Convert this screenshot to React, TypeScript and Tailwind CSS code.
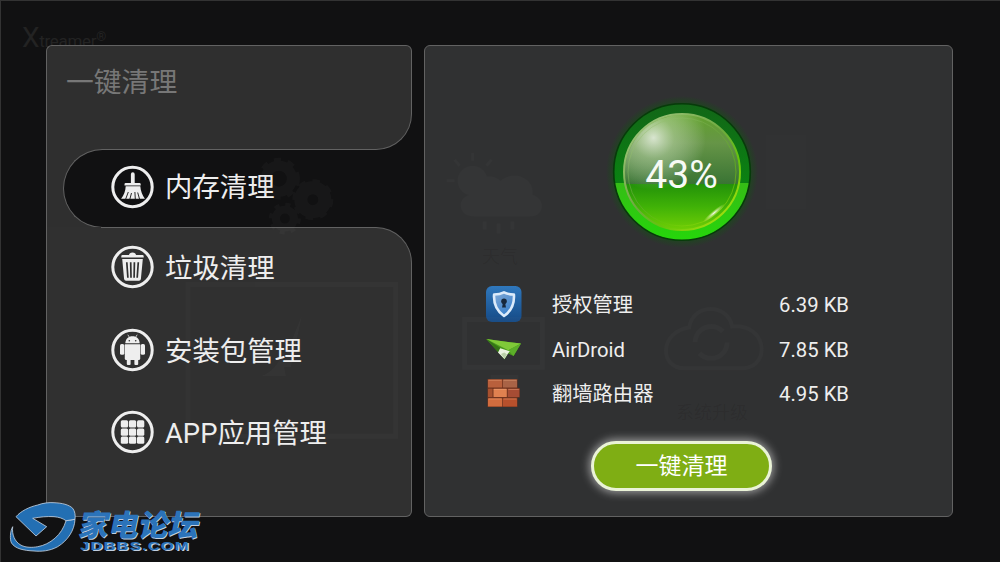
import type { ReactNode } from "react";

const menuItems = [
  { label: "垃圾清理", icon: <TrashIcon /> },
  { label: "安装包管理", icon: <AndroidIcon /> },
  { label: "APP应用管理", icon: <GridIcon /> },
];

const processes = [
  { name: "授权管理", size: "6.39 KB", icon: <ShieldIcon /> },
  { name: "AirDroid", size: "7.85 KB", icon: <PlaneIcon /> },
  { name: "翻墙路由器", size: "4.95 KB", icon: <BricksIcon /> },
];

function Ring({ children }: { children: ReactNode }) {
  return (
    <svg viewBox="0 0 44 44" className="h-11 w-11 shrink-0" fill="#eeeeee">
      <circle cx="21.5" cy="22" r="19.7" fill="none" stroke="#eeeeee" strokeWidth="3" />
      <g transform="translate(-0.5 0)">{children}</g>
    </svg>
  );
}

function BroomIcon() {
  return (
    <Ring>
      <path d="M20.4 18V9.200q0-1.900 1.900-1.900t1.900 1.900V18h4.800q1.200 0 1.200 1.200v1.200H14v-1.200q0-1.200 1.200-1.200z" />
      <path d="M15.2 21.2h14.6c.4 4.800 2 9 4.600 12.600H10.600c2.800-3.600 4.400-7.800 4.600-12.600z" />
      <path
        d="M17.8 27l-2.6 7M21 28l-1.6 6M24.4 27l.4 7M27.2 27.5l1.8 6.5"
        stroke="#111111"
        strokeWidth="0.9"
      />
    </Ring>
  );
}

function TrashIcon() {
  return (
    <Ring>
      <path d="M18.5 10q.3-2.500 3.500-2.500t3.500 2.500H32q1.200 0 1.200 1.300v1.200H10.800v-1.200Q10.800 10 12 10z" />
      <path d="M11.7 14h20.6l-1.9 20q-.2 1.7-1.9 1.7h-13q-1.7 0-1.9-1.7z" />
      <path
        d="M16.3 17.2l1.1 15.6M20.2 17.2l.3 15.6M23.9 17.2l-.3 15.6M27.8 17.2l-1.1 15.6"
        stroke="#303030"
        strokeWidth="1.7"
      />
    </Ring>
  );
}

function AndroidIcon() {
  return (
    <Ring>
      <path d="M14.8 15.3c.2-4.5 3.2-7 7.2-7s7 2.5 7.2 7z" />
      <path d="M17.3 6.7l1.6 2.6M26.7 6.7l-1.6 2.6" stroke="#eeeeee" strokeWidth="0.8" />
      <circle cx="18.8" cy="12.7" r="0.8" fill="#303030" />
      <circle cx="25.2" cy="12.7" r="0.8" fill="#303030" />
      <path d="M14.3 16.2h15.4v14.2q0 1.6-1.6 1.6H15.9q-1.6 0-1.6-1.6z" />
      <rect x="9.5" y="16" width="4.3" height="10.8" rx="1.6" />
      <rect x="30.2" y="16" width="4.3" height="10.8" rx="1.6" />
      <rect x="16.3" y="30" width="3.8" height="7" rx="1" />
      <rect x="23.9" y="30" width="3.8" height="7" rx="1" />
    </Ring>
  );
}

function GridIcon() {
  const cells = [10.3, 18.4, 26.5];
  return (
    <Ring>
      {cells.map((y) =>
        cells.map((x) => <rect key={`${x}-${y}`} x={x} y={y} width="7.3" height="7.3" rx="1.5" />)
      )}
    </Ring>
  );
}

function ShieldIcon() {
  return (
    <svg viewBox="0 0 36 36" className="h-9 w-9">
      <defs>
        <linearGradient id="shieldTile" x1="0" y1="0" x2="0" y2="1">
          <stop offset="0" stopColor="#2f78bd" />
          <stop offset="1" stopColor="#154a86" />
        </linearGradient>
        <linearGradient id="shieldFace" x1="0" y1="0" x2="0.6" y2="1">
          <stop offset="0" stopColor="#82aad6" />
          <stop offset="1" stopColor="#3980cb" />
        </linearGradient>
      </defs>
      <rect width="35.5" height="36" rx="6" fill="url(#shieldTile)" />
      <path
        d="M18 6.3c3 1.6 6 2.2 9.9 2.2.7 10-2.7 16.7-9.9 21.5C10.8 25.2 7.4 18.5 8.1 8.5c3.9 0 6.9-.6 9.9-2.2z"
        fill="url(#shieldFace)"
        stroke="#dcebfa"
        strokeWidth="2.6"
        strokeLinejoin="round"
      />
      <circle cx="18" cy="15.2" r="2.8" fill="#17283c" />
      <path d="M17 16.5h2l1 5h-4z" fill="#17283c" />
    </svg>
  );
}

function PlaneIcon() {
  return (
    <svg viewBox="0 0 36 24" className="h-6 w-9">
      <path d="M.3 2L35 6.6 27.5 19 22 16.6 18.5 22.6 12.5 15.5z" fill="#49971d" />
      <path d="M.3 2L35 6.6 22.3 13.2z" fill="#7fc938" />
      <path d="M.3 2l22 11.2 5.2 5.8L35 6.6 22.3 13.2z" fill="#5cae29" />
      <path d="M.3 2l12.2 13.5 1.7-4.8z" fill="#347416" />
      <path d="M14.2 11.2l9.6 3-1.8 2.4-3.5 5.4-6.5-6.5z" fill="#eaf2df" />
      <path d="M15 17l3.3-1.4 2.6 1.6-2.4 4.2z" fill="#b9cfa7" />
    </svg>
  );
}

function BricksIcon() {
  const bricks = [
    [1, 0.5, 14.2, 8, "#b9603c"],
    [16, 0.5, 14, 8, "#a96346"],
    [1, 9.7, 4.5, 8.4, "#a7512f"],
    [6.5, 9.7, 13.3, 8.4, "#e08150"],
    [20.8, 9.7, 11.5, 8.4, "#a64c34"],
    [1, 19.3, 14.2, 8.2, "#d16c3e"],
    [16, 19.3, 14, 8.2, "#b6502c"],
  ] as const;
  return (
    <svg viewBox="-0.5 0 35 28" className="h-7 w-9">
      <path d="M.5 0h30v9h2.3v9.4h-2.3V28H.5z" fill="#71341f" />
      {bricks.map(([x, y, w, h, color]) => (
        <rect key={`${x}-${y}`} x={x} y={y} width={w} height={h} rx="0.5" fill={color} />
      ))}
      <path
        d="M1.5 1.3h13M16.5 1.3h13M7 10.5h12.3M21.3 10.5h10.5M1.5 20h13M16.5 20h13"
        stroke="#efaa81"
        strokeWidth="0.7"
        opacity="0.6"
      />
    </svg>
  );
}

function MemoryGauge() {
  return (
    <div className="relative flex h-36 w-36 items-center justify-center">
      <svg viewBox="0 0 144 144" className="absolute inset-0 h-36 w-36 overflow-visible">
        <defs>
          <radialGradient id="halo">
            <stop offset="0.86" stopColor="#0c5a0c" stopOpacity="0.6" />
            <stop offset="1" stopColor="#0c5a0c" stopOpacity="0" />
          </radialGradient>
          <linearGradient id="rim" x1="0" y1="0" x2="0" y2="1">
            <stop offset="0" stopColor="#126617" />
            <stop offset="0.58" stopColor="#0a8212" />
            <stop offset="0.58" stopColor="#35bd16" />
            <stop offset="1" stopColor="#26d60b" />
          </linearGradient>
          <linearGradient id="orb" x1="0" y1="0" x2="0" y2="1">
            <stop offset="0" stopColor="#62a22c" />
            <stop offset="0.25" stopColor="#669547" />
            <stop offset="0.6" stopColor="#3a7434" />
            <stop offset="0.605" stopColor="#239209" />
            <stop offset="0.8" stopColor="#40b207" />
            <stop offset="1" stopColor="#70ce05" />
          </linearGradient>
          <radialGradient id="shine" cx="0.25" cy="0.2" r="0.46">
            <stop offset="0" stopColor="#ffffff" stopOpacity="0.75" />
            <stop offset="0.4" stopColor="#dcebd0" stopOpacity="0.4" />
            <stop offset="1" stopColor="#ffffff" stopOpacity="0" />
          </radialGradient>
          <linearGradient id="edge" x1="0" y1="0" x2="0.9" y2="1">
            <stop offset="0" stopColor="#a9c98b" />
            <stop offset="0.5" stopColor="#6eaa3e" />
            <stop offset="0.7" stopColor="#65c50c" />
            <stop offset="1" stopColor="#b5e70f" />
          </linearGradient>
          <radialGradient id="glint">
            <stop offset="0" stopColor="#ffffff" stopOpacity="0.95" />
            <stop offset="1" stopColor="#d8f56b" stopOpacity="0" />
          </radialGradient>
        </defs>
        <circle cx="72" cy="72" r="76" fill="url(#halo)" />
        <circle cx="72" cy="72" r="68.3" fill="url(#rim)" stroke="#073b0a" strokeWidth="1.6" />
        <circle cx="72" cy="72" r="58" fill="url(#orb)" stroke="url(#edge)" strokeWidth="2" />
        <circle cx="72" cy="72" r="57" fill="url(#shine)" />
        <circle cx="72" cy="72" r="54" fill="none" stroke="url(#edge)" strokeWidth="1" opacity="0.5" />
        <ellipse cx="104" cy="113" rx="14" ry="2.5" fill="url(#glint)" transform="rotate(-40 104 113)" />
      </svg>
      <span className="relative pt-1.5 font-['Roboto'] text-[39px] leading-none text-[#f7faf5]">43%</span>
    </div>
  );
}

// Launcher tiles that stay dimly visible through the overlay
function Wallpaper() {
  return (
    <svg viewBox="0 0 1000 562" className="pointer-events-none absolute inset-0 h-full w-full" aria-hidden="true">
      <g fill="#ffffff" opacity="0.014">
        <circle cx="472" cy="180" r="15" />
        <path d="M473 216c-15 0-18-18-4-22 1-16 20-24 31-14 14-12 35-2 32 14 14 4 12 22-2 22z" />
        <path d="M472 160v-8M459 165l-5-6M486 165l5-6M454 180h-8" stroke="#fff" strokeWidth="3" />
        <path d="M484 221v8M498 223v10M512 221v8" stroke="#fff" strokeWidth="4" />
      </g>
      <g fill="none" stroke="#888888" opacity="0.055">
        <circle cx="312" cy="199" r="12" strokeWidth="13" />
        <circle cx="312" cy="199" r="18" strokeWidth="5" strokeDasharray="7 7" />
        <circle cx="278" cy="178" r="13" strokeWidth="10" />
        <circle cx="278" cy="178" r="19" strokeWidth="4" strokeDasharray="7 7" />
        <circle cx="284" cy="218" r="9" strokeWidth="8" />
        <circle cx="284" cy="218" r="14" strokeWidth="4" strokeDasharray="5 6" />
      </g>
      <g fill="none" stroke="#999999" opacity="0.035">
        <path d="M187 284h208v152H187z" strokeWidth="5" />
        <path d="M464 319h78v48h-78zM490 377h28" strokeWidth="5" />
        <path d="M684 368c-26-1-24-37 5-41 4-25 39-24 43-1 35-3 39 39 12 42z" strokeWidth="4" />
        <circle cx="711" cy="342" r="16" strokeWidth="5" strokeDasharray="38 12" />
      </g>
      <path d="M301 315l-11 52h-10zM256 376c8 1 19-7 25-21l4 21h-29z" fill="#ffffff" opacity="0.025" />
      <path d="M765 134h42v75h-42z" fill="#ffffff" opacity="0.008" />
    </svg>
  );
}

function WallpaperLabels() {
  return (
    <div className="pointer-events-none absolute inset-0 text-[18px] leading-none text-black/[0.08]" aria-hidden="true">
      <span className="absolute top-[247px] left-[481px]">天气</span>
      <span className="absolute top-[403px] left-[675px]">系统升级</span>
    </div>
  );
}

function SiteLogo() {
  return (
    <div className="absolute bottom-2 left-2 flex items-start">
      <svg viewBox="0 0 68 52" className="h-[52px] w-[68px]">
        <g fill="#236fb3" stroke="#c9d5e4" strokeWidth="0.8" strokeLinejoin="round">
          <path d="M57 18.7l9-1.4c-.5 11-7 21-17.3 27.4-8 4.3-16 5-23.7 4.3C14 48.5 6 46.5 2.5 41 .8 38 1 29 3.7 24.7c-1 8 2 15 8.3 18.5 5 2.5 11 2.5 16.700 1.500C41 42.500 53 33 57 18.700z" />
          <path d="M7 14.7C12 9 20 5 28.7 3 34 1 40 .3 45 .7c8 .3 15 2 18.7 5.6 2.3 3 2.8 7 2.3 11l-9 1.4C54 16.5 50 15 45 14.7c-7-.5-14 .3-21.3 1.6l14 8.4L27 34z" />
        </g>
      </svg>
      <div className="pt-[6px] pl-[3px] text-[#2b73b9] [text-shadow:1px_1px_0_#c0cee0]">
        <p className="-skew-x-12 font-['Noto_Sans_CJK_SC'] text-[30px] leading-[30px] font-black">家电论坛</p>
        <p className="mt-0.5 origin-left scale-x-150 font-['Liberation_Sans'] text-[11px] leading-[13px] font-bold tracking-[0.8px]">
          JDBBS.COM
        </p>
      </div>
    </div>
  );
}

export default function App() {
  return (
    <div className="relative h-[562px] w-[1000px] overflow-hidden border-t border-l border-[#333333] bg-[#111112] font-['Roboto','Noto_Sans_CJK_SC',sans-serif] text-[#eeeeee]">
      <p className="absolute top-[23px] left-[21px] text-[17px] leading-7 tracking-[-0.3px] text-[#232323]">
        <span className="text-[28px]">X</span>treamer<sup>®</sup>
      </p>

      <main className="relative flex gap-3 pt-11 pl-[45px]">
        <nav className="flex h-[472px] w-[366px] flex-col">
          <div className="flex h-[105px]">
            <div className="w-14 rounded-tl-md border-t border-l border-[#626262] bg-[#2f2f2f]" />
            <div className="-ml-px flex-1 rounded-tr-md rounded-br-[36px] border-t border-r border-b border-[#626262] bg-[#2f2f2f]">
              <h1 className="-ml-[35px] pt-[17px] text-[27.8px] leading-10 text-[#777777]">一键清理</h1>
            </div>
          </div>
          <div className="flex h-[77px]">
            <div className="w-14 shrink-0 border-l border-[#626262] bg-[#2f2f2f]" />
            <div className="-mt-px -ml-[39px] flex h-[79px] w-[312px] items-center gap-2.5 rounded-l-full border-y border-l border-[#626262] bg-[#111112] pb-[3px] pl-[47px] text-[27.4px]">
              <BroomIcon />
              <span className="pt-0.5 leading-10">内存清理</span>
            </div>
          </div>
          <div className="flex flex-1">
            <div className="w-14 shrink-0 rounded-bl-md border-b border-l border-[#626262] bg-[#303030]" />
            <div className="-ml-px flex-1 rounded-tr-[36px] rounded-br-md border-t border-r border-b border-[#626262] bg-[#303030]">
              <ul className="flex flex-col gap-[38.5px] pt-[17px] pl-2.5 text-[27.4px]">
                {menuItems.map((item) => (
                  <li key={item.label} className="flex h-11 items-center gap-2.5">
                    {item.icon}
                    <span className="pt-1 leading-10">{item.label}</span>
                  </li>
                ))}
              </ul>
            </div>
          </div>
        </nav>

        <section className="flex h-[472px] w-[529px] flex-col items-center rounded-md border border-[#626262] bg-[#303132] pt-[54px] pr-[14px]">
          <MemoryGauge />
          <ul className="mt-[38px] mr-[28px] flex w-[363px] flex-col">
            {processes.map((item) => (
              <li key={item.name} className="flex h-[44.5px] items-center text-[20.3px]">
                <div className="flex w-9 justify-center">{item.icon}</div>
                <span className="flex-1 pt-0.5 pl-[30px]">{item.name}</span>
                <span className="pt-0.5">{item.size}</span>
              </li>
            ))}
          </ul>
          <button className="mt-[25px] h-[50px] w-[181px] rounded-full border-3 border-[#eaf3d7] bg-[#7fae14] pt-1 text-[23px] text-white shadow-[0_0_9px_2px_rgba(255,255,255,0.5)]">
            一键清理
          </button>
        </section>
      </main>

      <Wallpaper />
      <WallpaperLabels />
      <SiteLogo />
    </div>
  );
}
